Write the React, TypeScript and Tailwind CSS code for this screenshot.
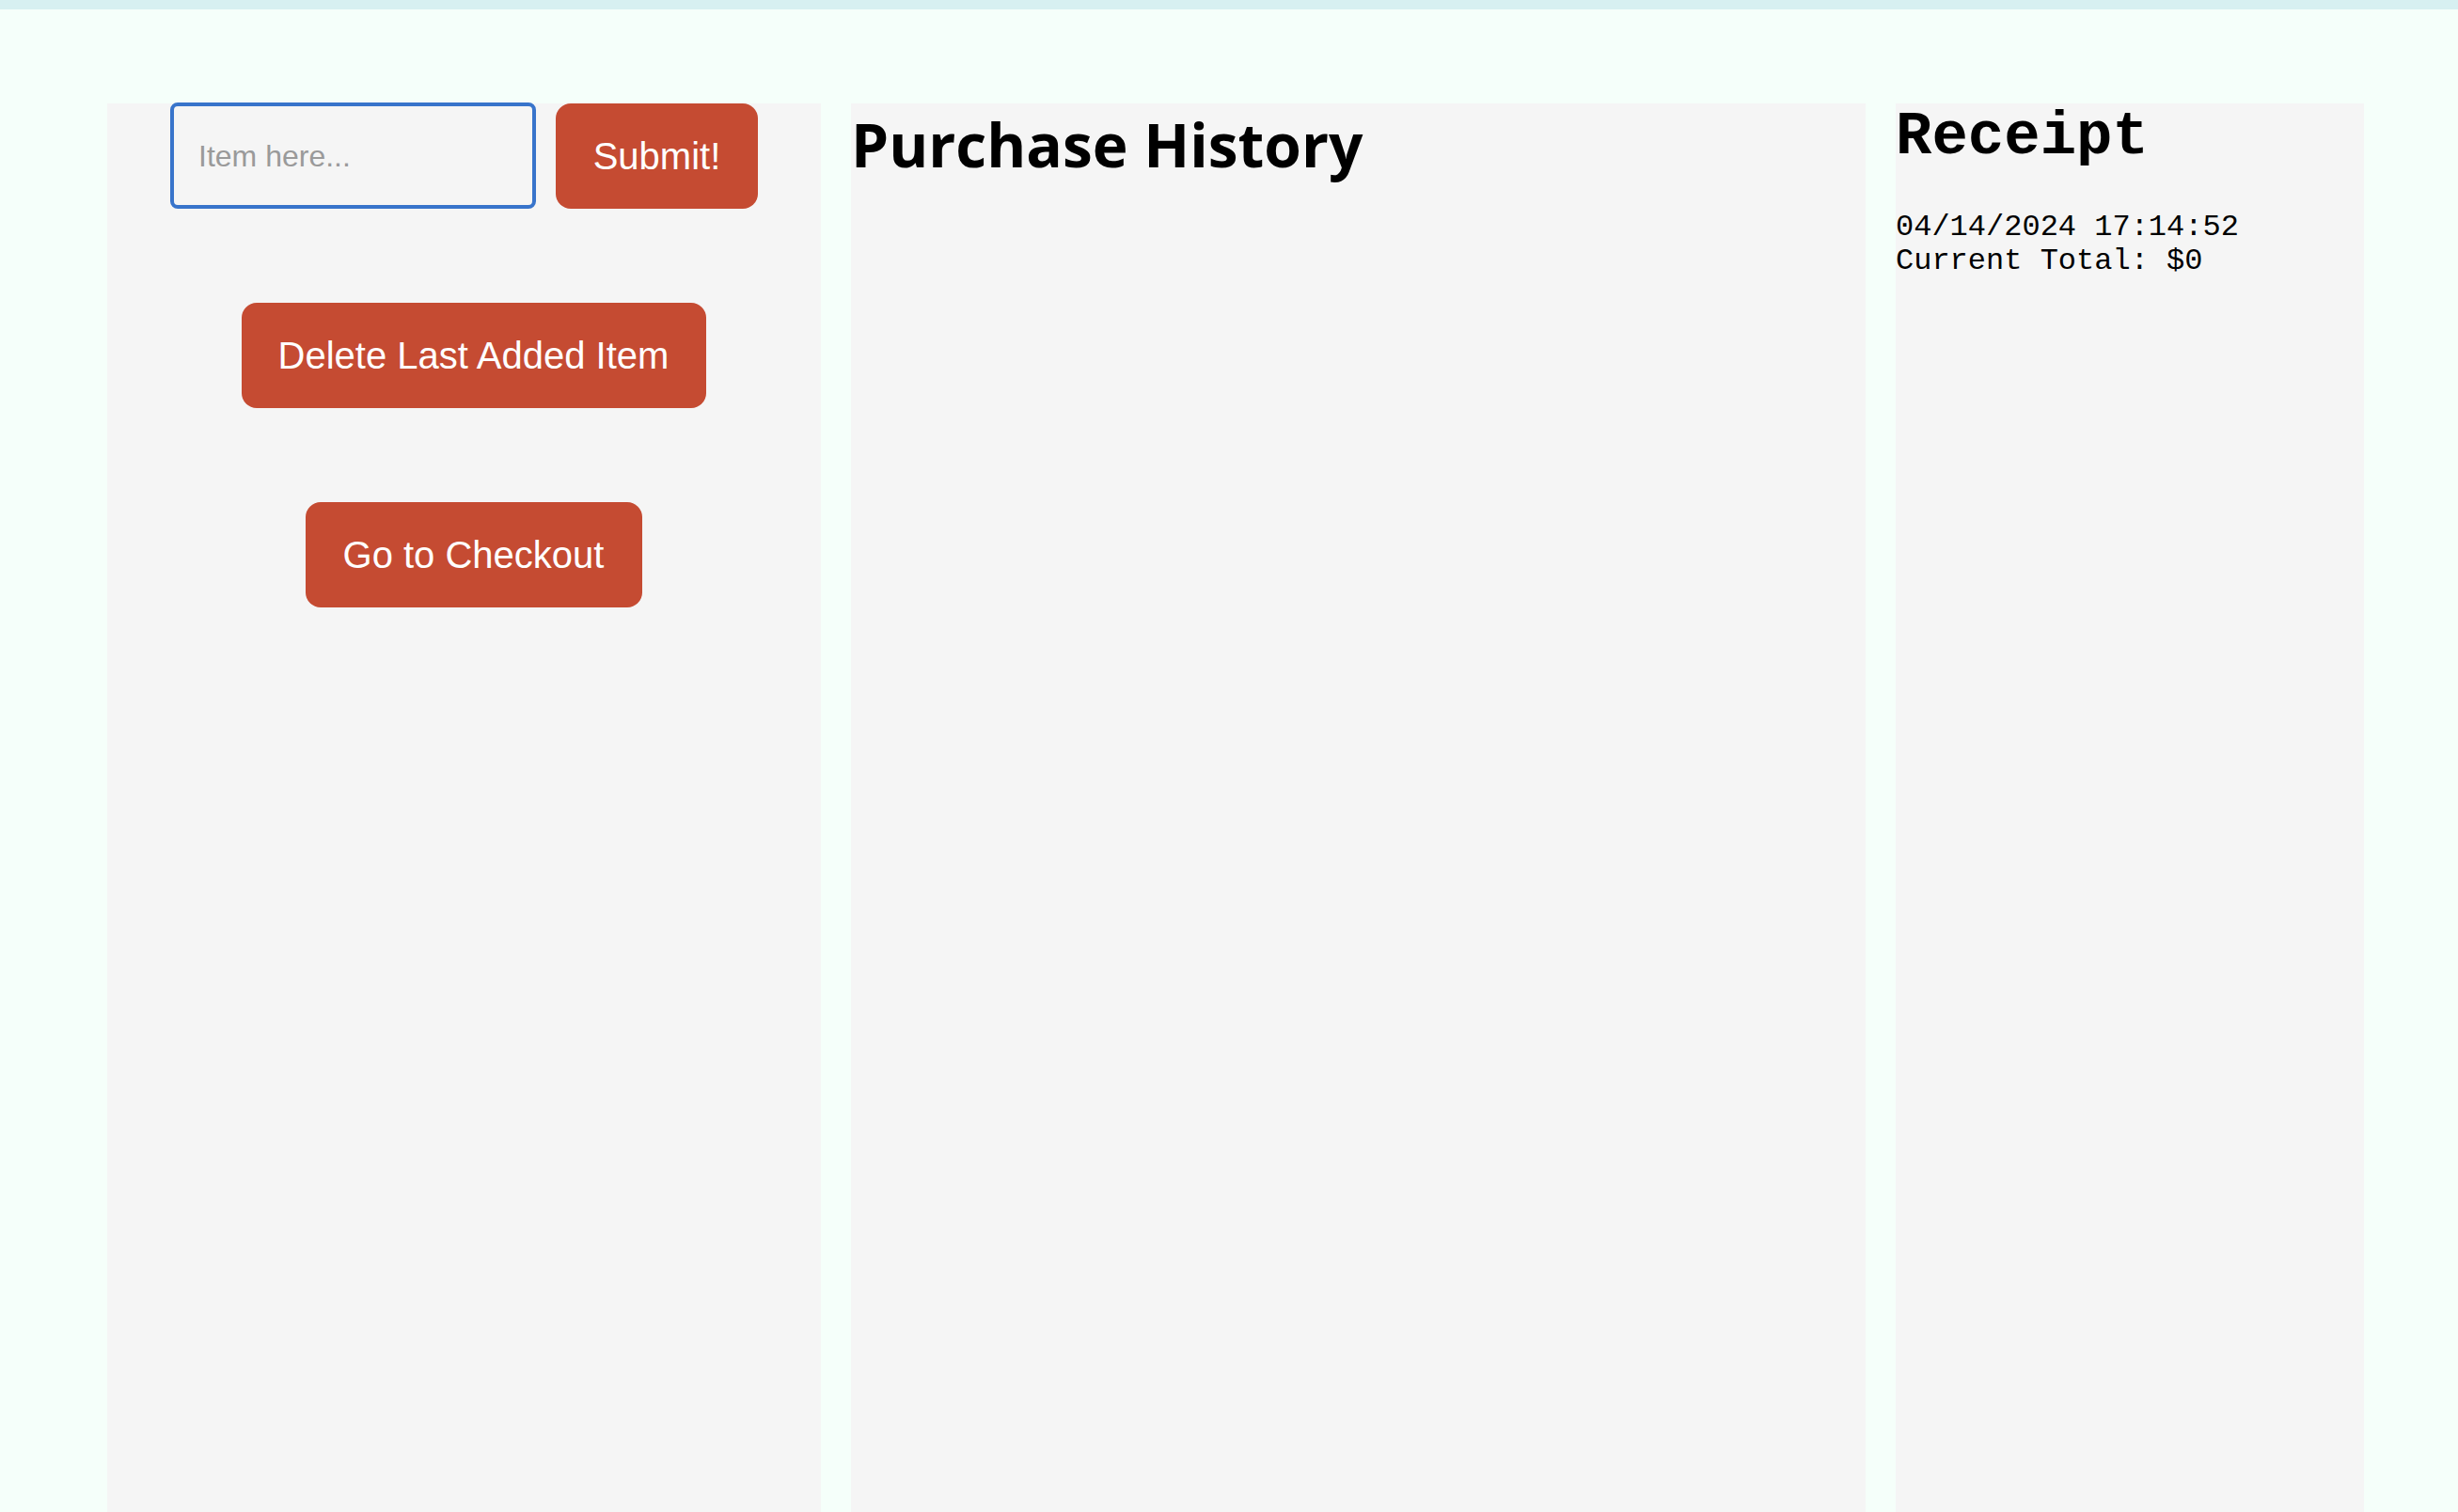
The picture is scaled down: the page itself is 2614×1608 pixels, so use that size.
import React from "react";

export default function App() {
  const btn =
    "flex items-center justify-center h-[112px] rounded-[16px] bg-[#c54b32] text-white text-[40px] leading-none font-['Liberation_Sans',Arial,sans-serif]";
  return (
    <div className="h-[1608px] w-full overflow-hidden bg-[#f5fffa] flex flex-col">
      <div className="h-[10px] shrink-0 bg-[#d7f0f1]" />
      <div className="flex flex-1 pt-[100px] pl-[114px] gap-[32px]">
        {/* Left panel */}
        <div className="w-[759px] shrink-0 bg-[#f5f5f5] flex flex-col">
          <div className="flex justify-center gap-[21px]">
            <div className="w-[389px] h-[113px] -mt-[1px] rounded-[8px] border-[4px] border-[#3874cb] flex items-center pl-[26px]">
              <input
                placeholder="Item here..."
                className="w-full bg-transparent outline-none text-[32px] text-black placeholder:text-[#9a9a9a] font-['Liberation_Sans',Arial,sans-serif]"
              />
            </div>
            <button className={btn + " w-[215px]"}>Submit!</button>
          </div>
          <div className="flex flex-col items-center pl-[20px] pt-[100px] gap-[100px]">
            <button className={btn + " w-[494px]"}>Delete Last Added Item</button>
            <button className={btn + " w-[358px]"}>Go to Checkout</button>
          </div>
        </div>

        {/* Middle panel */}
        <div className="w-[1079px] shrink-0 bg-[#f5f5f5]">
          <h1 className="text-[64px] font-bold text-black font-['Open_Sans',sans-serif] leading-[87px]">
            Purchase History
          </h1>
        </div>

        {/* Right panel */}
        <div className="w-[498px] shrink-0 bg-[#f5f5f5] font-['Liberation_Mono','Courier_New',monospace] text-black">
          <h1 className="text-[64px] font-bold leading-[72px]">Receipt</h1>
          <div className="mt-[42px] text-[32px] leading-[36px]">
            <div>04/14/2024 17:14:52</div>
            <div>Current Total: $0</div>
          </div>
        </div>
      </div>
    </div>
  );
}
